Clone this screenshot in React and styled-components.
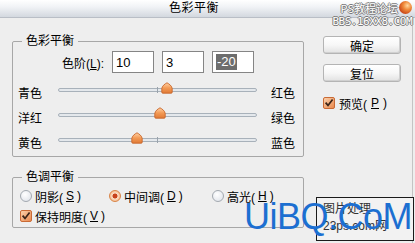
import React from 'react';
import styled, { createGlobalStyle } from 'styled-components';

const GlobalStyle = createGlobalStyle`
  html, body {
    margin: 0;
    padding: 0;
    background: #eeeeee;
  }
  body {
    font-family: "Liberation Sans", "Noto Sans CJK SC", sans-serif;
    font-size: 12px;
    color: #000;
  }
`;

const Window = styled.div`
  position: relative;
  width: 415px;
  height: 243px;
  overflow: hidden;
  background: #eeeeee;
  display: flex;
  flex-direction: column;
`;

const TitleBar = styled.div`
  height: 17px;
  display: flex;
  align-items: center;
  justify-content: center;
  padding-right: 27px;
  background: linear-gradient(#ffffff 0%, #f1f3f6 40%, #d3d8df 100%);
  border-bottom: 1px solid #b9bec6;
  font-size: 12px;
  line-height: 17px;
  letter-spacing: 0.5px;
`;

const Body = styled.div`
  flex: 1;
  display: flex;
  border-right: 1px solid #c4c4c4;
  margin-right: 2px;
`;

const LeftCol = styled.div`
  width: 292px;
  margin-left: 12px;
  display: flex;
  flex-direction: column;
`;

const Group = styled.fieldset`
  margin: ${p => p.$top}px 0 0 0;
  padding: 0;
  min-width: 0;
  border: 1px solid #a7a7a7;
  border-radius: 2px;
`;

const Legend = styled.legend`
  margin-left: 9px;
  padding: 0 4px;
  height: 16px;
  line-height: 16px;
  font-size: 12px;
`;

const GroupInner = styled.div`
  padding: ${p => p.$pad};
  display: flex;
  flex-direction: column;
`;

const LevelsRow = styled.div`
  display: flex;
  align-items: center;
  height: 22px;
  gap: 8px;
`;

const LevelsLabel = styled.div`
  width: 91px;
  text-align: right;
`;

const LevelInput = styled.div`
  box-sizing: border-box;
  width: 42px;
  height: 22px;
  border: 1px solid #858585;
  background: #ffffff;
  display: flex;
  align-items: center;
  padding-left: 3px;
  font-size: 13px;
`;

const Selected = styled.span`
  background: #6d6d6d;
  color: #ffffff;
  padding: 0 1px;
  line-height: 16px;
`;

const Sliders = styled.div`
  margin-top: 5px;
  display: flex;
  flex-direction: column;
`;

const SliderRow = styled.div`
  display: grid;
  grid-template-columns: 40px 199px 14px auto;
  align-items: center;
  height: 25px;
  padding-left: 5px;
`;

const SideLabel = styled.div`
  grid-column: ${p => p.$col};
  padding-top: 3px;
`;

const Track = styled.div`
  position: relative;
  grid-column: 2;
  box-sizing: border-box;
  height: 4px;
  margin-top: -2px;
  border: 1px solid #a8b1ba;
  border-radius: 2px;
  background: #e4e8ec;
`;

const Tick = styled.div`
  position: absolute;
  left: 98px;
  top: -2px;
  width: 1px;
  height: 6px;
  background: #9aa3ac;
`;

const Thumb = styled.svg`
  position: absolute;
  top: -7px;
  margin-left: -6px;
  width: 12px;
  height: 12px;
`;

const Mn = styled.span`
  text-decoration: underline;
  text-underline-offset: 1px;
`;

const ToneGrid = styled.div`
  display: grid;
  grid-template-columns: 89px 103px auto;
  grid-auto-rows: 20px;
  align-items: center;
  padding-left: 7px;
`;

const Option = styled.label`
  display: flex;
  align-items: center;
  gap: 3px;
  grid-column: ${p => p.$span ? '1 / span 2' : 'auto'};
`;

const Radio = styled.span`
  box-sizing: border-box;
  width: 12px;
  height: 12px;
  border-radius: 50%;
  border: 1px solid ${p => p.$on ? '#d98446' : '#a3a9b0'};
  background: ${p => p.$on
    ? 'radial-gradient(circle, #c8431c 0 2.2px, #fbe0c8 2.8px, #f3a468 100%)'
    : 'radial-gradient(circle at 40% 35%, #ffffff 0%, #e6e9ee 70%, #cdd2d8 100%)'};
`;

const Check = styled.svg`
  width: 12px;
  height: 12px;
  flex: none;
`;

const RightCol = styled.div`
  display: flex;
  flex-direction: column;
  padding: 18px 0 0 19px;
`;

const Button = styled.div`
  box-sizing: border-box;
  width: 78px;
  height: 18px;
  margin-bottom: 10px;
  display: flex;
  align-items: center;
  justify-content: center;
  border: 1px solid #b4b4b4;
  border-radius: 3px;
  background: linear-gradient(#ffffff 0%, #f7f7f7 50%, #e2e2e2 100%);
  box-shadow: inset -1px -1px 0 #d0d0d0;
  font-size: 12px;
`;

const Preview = styled(Option)`
  margin-top: 4px;
  height: 14px;
  gap: 4px;
`;

const SiteMark = styled.div`
  position: absolute;
  top: 1px;
  right: 3px;
  width: 84px;
  display: flex;
  flex-direction: column;
  align-items: flex-end;
  font-family: "DejaVu Sans Mono", monospace;
  color: #ffffff;
  line-height: 12px;
  text-shadow: 1px 0 0 #7a7a7a, -1px 0 0 #7a7a7a, 0 1px 0 #7a7a7a, 0 -1px 0 #7a7a7a;
`;

const SiteTop = styled.div`
  display: flex;
  align-items: center;
  gap: 1px;
  font-family: "Noto Sans CJK SC", sans-serif;
  font-size: 11px;
`;

const Ball = styled.span`
  width: 13px;
  height: 13px;
  border-radius: 50%;
  background: radial-gradient(circle at 65% 35%, #ffd8a0 0%, #f08a3a 35%, #c23a12 80%);
`;

const SiteBottom = styled.div`
  font-size: 11px;
  letter-spacing: -0.5px;
  margin-top: 2px;
`;

const Stamp = styled.div`
  position: absolute;
  left: 316px;
  top: 197px;
  box-sizing: border-box;
  width: 98px;
  height: 44px;
  border: 1px solid #1a1a1a;
  background: #f2f2f2;
  padding: 3px 0 0 6px;
  font-size: 12px;
  line-height: 17px;
  color: #333;
`;

const BigMark = styled.div`
  position: absolute;
  left: 244px;
  top: 197px;
  font-family: "Liberation Sans", sans-serif;
  font-size: 36px;
  line-height: 40px;
  color: #1c6fd1;
  letter-spacing: -0.5px;
`;

const ThumbIcon = ({ pos }) => (
  <Thumb style={{ left: `${pos}px` }} viewBox="0 0 12 12">
    <defs>
      <linearGradient id="tg" x1="0" y1="0" x2="0" y2="1">
        <stop offset="0" stopColor="#ffd2a6" />
        <stop offset="0.5" stopColor="#f39a55" />
        <stop offset="1" stopColor="#e07a35" />
      </linearGradient>
    </defs>
    <path d="M6 0.8 C8 1.8 11 4 11.2 6.5 L11.2 10.2 Q11.2 11.2 10.2 11.2 L1.8 11.2 Q0.8 11.2 0.8 10.2 L0.8 6.5 C1 4 4 1.8 6 0.8 Z"
      fill="url(#tg)" stroke="#c8662c" strokeWidth="0.9" />
  </Thumb>
);

const CheckIcon = () => (
  <Check viewBox="0 0 12 12">
    <defs>
      <linearGradient id="cg" x1="0" y1="0" x2="1" y2="1">
        <stop offset="0" stopColor="#fbd3b0" />
        <stop offset="1" stopColor="#e9864a" />
      </linearGradient>
    </defs>
    <rect x="0.5" y="0.5" width="11" height="11" rx="1.5" fill="url(#cg)" stroke="#c96a35" />
    <path d="M2.6 5.6 L5 8.4 L9.6 2.4" fill="none" stroke="#3a2418" strokeWidth="1.7" />
  </Check>
);

const sliders = [
  { left: '青色', right: '红色', value: 10 },
  { left: '洋红', right: '绿色', value: 3 },
  { left: '黄色', right: '蓝色', value: -20 },
];

const App = () => (
  <>
    <GlobalStyle />
    <Window>
      <TitleBar>色彩平衡</TitleBar>
      <Body>
        <LeftCol>
          <Group $top={15}>
            <Legend>色彩平衡</Legend>
            <GroupInner $pad="2px 0 3px 0">
              <LevelsRow>
                <LevelsLabel>色阶(<Mn>L</Mn>):</LevelsLabel>
                <LevelInput>10</LevelInput>
                <LevelInput>3</LevelInput>
                <LevelInput><Selected>-20</Selected></LevelInput>
              </LevelsRow>
              <Sliders>
                {sliders.map(s => (
                  <SliderRow key={s.left}>
                    <SideLabel $col={1}>{s.left}</SideLabel>
                    <Track>
                      <Tick />
                      <ThumbIcon pos={98 + s.value} />
                    </Track>
                    <SideLabel $col={4}>{s.right}</SideLabel>
                  </SliderRow>
                ))}
              </Sliders>
            </GroupInner>
          </Group>
          <Group $top={12}>
            <Legend>色调平衡</Legend>
            <GroupInner $pad="1px 0 1px 0">
              <ToneGrid>
                <Option><Radio />阴影(<Mn>S</Mn>)</Option>
                <Option><Radio $on />中间调(<Mn>D</Mn>)</Option>
                <Option><Radio />高光(<Mn>H</Mn>)</Option>
                <Option $span><CheckIcon />保持明度(<Mn>V</Mn>)</Option>
              </ToneGrid>
            </GroupInner>
          </Group>
        </LeftCol>
        <RightCol>
          <Button>确定</Button>
          <Button>复位</Button>
          <Preview><CheckIcon />预览(<Mn>P</Mn>)</Preview>
        </RightCol>
      </Body>
      <SiteMark>
        <SiteTop>PS教程论坛<Ball /></SiteTop>
        <SiteBottom>BBS.16XX8.COM</SiteBottom>
      </SiteMark>
      <Stamp>
        图片处理<br />23ps.com网
      </Stamp>
      <BigMark>UiBQ.CoM</BigMark>
    </Window>
  </>
);

export default App;
